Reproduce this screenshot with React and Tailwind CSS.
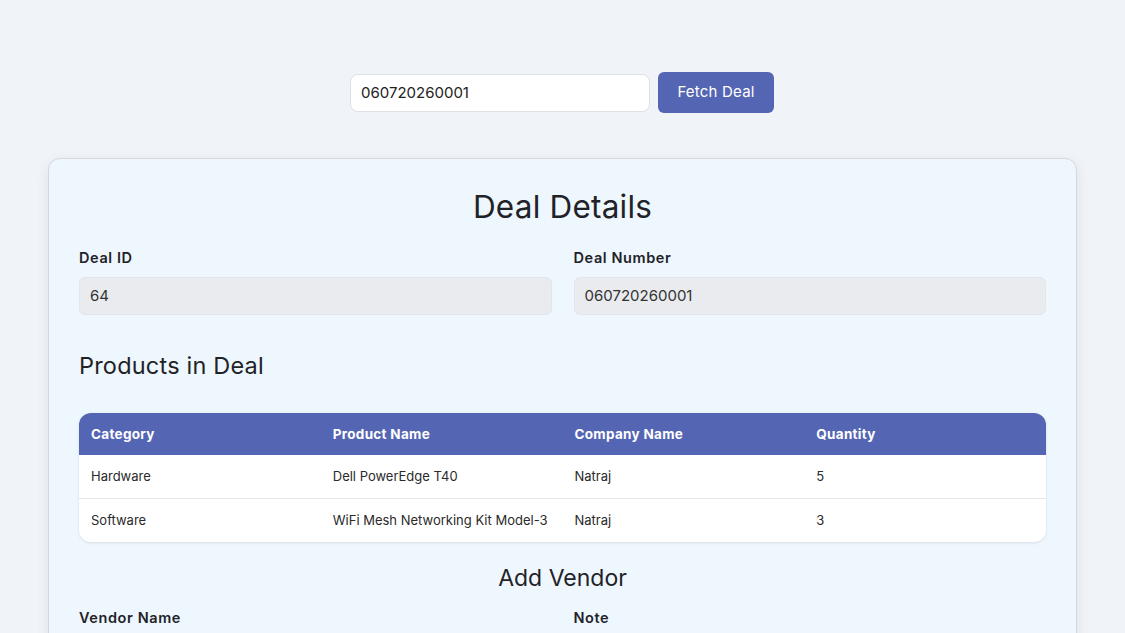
import React from "react";

export default function App() {
  const rows = [
    ["Hardware", "Dell PowerEdge T40", "Natraj", "5"],
    ["Software", "WiFi Mesh Networking Kit Model-3", "Natraj", "3"],
  ];
  return (
    <div className="min-h-[633px] bg-[#f0f3f7] text-[#1f2328] [font-family:Inter,'Open_Sans',sans-serif]">
      <div className="flex justify-center items-center gap-2 pt-[72px] pr-px">
        <input
          readOnly
          value="060720260001"
          className="w-[300px] h-[38px] rounded-lg border border-[#dde1e6] bg-white px-[10px] text-[15px] text-[#222] outline-none"
        />
        <button className="w-[116px] h-[41px] rounded-md bg-[#5465b3] text-white text-[15px] tracking-[0.2px]">
          Fetch Deal
        </button>
      </div>
      <div className="mx-[48px] mt-[45px] rounded-xl border border-[#d4d8de] bg-[#eef6fe] shadow-[0_4px_14px_rgba(0,0,0,0.08)] px-[30px] pt-[27px] pb-10">
        <h1 className="text-center text-[31.5px] leading-[42px] text-[#1f2328] tracking-[0.2px]">Deal Details</h1>
        <div className="grid grid-cols-2 gap-x-[22px] mt-[20px]">
          <div>
            <label className="block text-[14.5px] font-semibold leading-[20px] tracking-[0.6px]">Deal ID</label>
            <div className="mt-[9px] h-[38px] rounded-md border border-[#e2e5ea] bg-[#e9ebef] px-[10px] flex items-center text-[15px] text-[#333]">64</div>
          </div>
          <div>
            <label className="block text-[14.5px] font-semibold leading-[20px] tracking-[0.6px]">Deal Number</label>
            <div className="mt-[9px] h-[38px] rounded-md border border-[#e2e5ea] bg-[#e9ebef] px-[10px] flex items-center text-[15px] text-[#333]">060720260001</div>
          </div>
        </div>
        <h2 className="mt-[36px] text-[23.5px] leading-[30px] tracking-[0.2px]">Products in Deal</h2>
        <div className="mt-[32px] rounded-xl overflow-hidden bg-white shadow-[0_1px_3px_rgba(0,0,0,0.1)]">
          <table className="w-full table-fixed border-collapse">
            <thead>
              <tr className="bg-[#5465b3] text-white h-[42px]">
                {["Category", "Product Name", "Company Name", "Quantity"].map((h) => (
                  <th key={h} className="text-left font-bold text-[13.5px] tracking-[0.3px] px-3">{h}</th>
                ))}
              </tr>
            </thead>
            <tbody>
              {rows.map((r, i) => (
                <tr key={i} className={"h-[43.5px] text-[13px] text-[#2a2a2a] " + (i === 0 ? "border-b border-[#e3e6ea]" : "")}>
                  {r.map((c, j) => (
                    <td key={j} className="px-3 whitespace-nowrap">{c}</td>
                  ))}
                </tr>
              ))}
            </tbody>
          </table>
        </div>
        <h2 className="mt-[21px] text-center text-[23px] leading-[30px]">Add Vendor</h2>
        <div className="grid grid-cols-2 gap-x-[22px] mt-[15px]">
          <label className="block text-[14.5px] font-semibold leading-[20px] tracking-[0.6px]">Vendor Name</label>
          <label className="block text-[14.5px] font-semibold leading-[20px] tracking-[0.6px]">Note</label>
        </div>
      </div>
    </div>
  );
}
